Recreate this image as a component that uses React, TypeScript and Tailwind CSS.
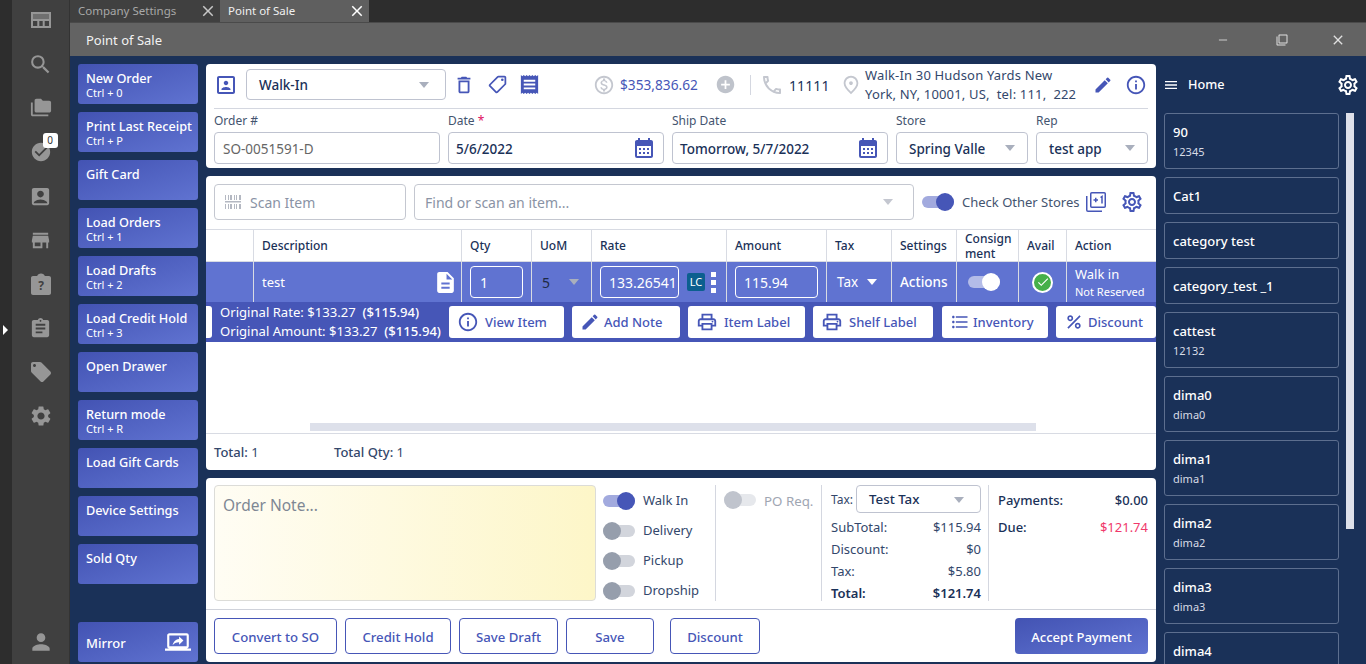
import React from "react";
import {
  MdAccountBox, MdAddCircle, MdAssignment, MdCalendarMonth, MdCheck, MdCheckCircle, MdClose, MdDescription, MdEdit,
  MdFormatListBulleted, MdInfoOutline, MdMenu, MdOutlineCall, MdOutlineDelete, MdOutlineLocalOffer,
  MdOutlineMonetizationOn, MdOutlinePlace, MdOutlinePrint, MdOutlineScreenShare, MdOutlineSettings, MdPercent, MdPerson,
  MdReceipt, MdSearch, MdSettings, MdStore, MdLocalOffer, MdFolderCopy, MdOutlineFilterNone, MdRemove, MdPortrait,
} from "react-icons/md";

const Caret = ({ c = "border-t-[#a9afbd]" }: { c?: string }) => (
  <span className={`w-0 h-0 border-x-[5px] border-x-transparent border-t-[6px] ${c}`} />
);

const Toggle = ({ on, dim, white }: { on?: boolean; dim?: boolean; white?: boolean }) => (
  <span className={`relative block w-8 h-3 rounded-full shrink-0 ${white ? "bg-[#b4bce8]" : on ? "bg-[#a2aade]" : dim ? "bg-[#e6e8ec]" : "bg-[#d2d5dc]"}`}>
    <span className={`absolute -top-[3px] w-[18px] h-[18px] rounded-full ${on ? "right-0" : "left-0"} ${white ? "bg-white" : on ? "bg-[#4656b7]" : dim ? "bg-[#c0c4cd]" : "bg-[#969eac]"}`} />
  </span>
);

const SideBtn = ({ t, s }: { t: string; s?: string }) => (
  <div className="h-10 w-[120px] shrink-0 rounded-[3px] bg-linear-to-br from-[#4353b3] to-[#6073d1] text-white pl-2 pt-[6px]">
    <div className="text-[12.7px] leading-4 font-medium">{t}</div>
    {s && <div className="text-[11px] leading-[14px]">{s}</div>}
  </div>
);

const Field = ({ label, children, star }: { label: string; children: React.ReactNode; star?: boolean }) => (
  <div>
    <div className="text-[12px] leading-4 h-4 pt-[1px] text-[#44546f]">{label}{star && <span className="text-[#e0115f]"> *</span>}</div>
    <div className="mt-[4px] h-8 border border-[#bfc3d0] rounded-[4px] flex items-center px-2 text-[13.5px] text-[#1a3158] font-medium [&>span:first-child]:pt-[2px]">{children}</div>
  </div>
);

const ActBtn = ({ w, icon, t, gap }: { w: string; icon: React.ReactNode; t: string; gap: string }) => (
  <div className={`${w} ${gap} h-8 shrink-0 bg-white rounded-[3px] flex items-center justify-start pl-2 text-[13px] font-medium text-[#4656b7]`}>
    {icon}<span className="pt-[1px]">{t}</span>
  </div>
);

const OutBtn = ({ w, t }: { w: string; t: string }) => (
  <div className={`${w} h-9 pt-[3px] border border-[#4656b7] rounded-[4px] flex items-center justify-center text-[13.2px] font-medium text-[#4656b7]`}>{t}</div>
);

const Cell = ({ c = "", children }: { c?: string; children?: React.ReactNode }) => (
  <div className={`border-r border-[#d8dbe3] flex items-center ${c}`}>{children}</div>
);

const HelpClip = () => (
  <svg width="20" height="22" viewBox="0 0 20 22" fill="#969696">
    <path d="M2 3h4.2C6.6 1.5 8 .5 10 .5s3.4 1 3.8 2.500H18c1.100 0 2 .9 2 2v15c0 1.100-.9 2-2 2H2c-1.100 0-2-.9-2-2V5c0-1.100.9-2 2-2z" />
    <text x="10" y="17" textAnchor="middle" fontSize="12" fontWeight="700" fill="#404040" fontFamily="Noto Sans">?</text>
  </svg>
);

const TableIcon = () => (
  <svg width="20" height="16" viewBox="0 0 20 16" fill="none" stroke="#969696" strokeWidth="2">
    <rect x="1" y="1" width="18" height="14" />
    <path d="M1 8h18M7.300 8v7M12.700 8v7" />
    <rect x="1" y="1" width="18" height="6" fill="#969696" stroke="none" opacity=".55" />
  </svg>
);

const Barcode = () => (
  <svg width="16" height="14" viewBox="0 0 16 14" fill="#b4b8c2" className="shrink-0">
    <path d="M0 0h1v5H0zM3 0h1v5H3zM5 0h2v5H5zM9 0h1v5H9zM11 0h1v5h-1zM14 0h2v5h-2zM0 6h16v1.500H0zM0 9h1v5H0zM3 9h1v5H3zM5 9h2v5H5zM9 9h1v5H9zM11 9h1v5h-1zM14 9h2v5h-2z" />
  </svg>
);

const PlusOne = () => (
  <svg width="20" height="20" viewBox="0 0 20 20" fill="none" stroke="#4656b7" strokeWidth="1.500" className="ml-[7px] shrink-0">
    <rect x="4.750" y=".75" width="14.500" height="14.500" rx="1" />
    <path d="M.75 4v14c0 .7.6 1.250 1.250 1.250h14" />
    <path d="M7.500 8h4.500M9.750 5.750v4.500M14.500 5.500l1.500-1v7" />
  </svg>
);

const cats: [string, string?][] = [
  ["90", "12345"], ["Cat1"], ["category test"], ["category_test _1"], ["cattest", "12132"], ["dima0", "dima0"],
  ["dima1", "dima1"], ["dima2", "dima2"], ["dima3", "dima3"], ["dima4", "dima4"],
];

const rail = "text-[#969696]";
const cols = "grid-cols-[48px_208px_70px_60px_135px_100px_65px_65px_62px_48px_1fr]";

export default function App() {
  return (
    <div className="w-[1366px] h-[664px] overflow-hidden flex bg-[#2d2d2d] font-['Noto_Sans',sans-serif]">
      <div className="relative w-3 shrink-0 bg-[#2d2d2d]">
        <span className="absolute left-[3px] top-[325px] w-0 h-0 border-y-[5px] border-y-transparent border-l-[5px] border-l-white" />
      </div>
      <div className="w-[58px] shrink-0 bg-[#404040] border-r border-[#333] flex flex-col items-center relative">
        <div className="h-11 w-full grid place-items-center -mt-[2px]"><TableIcon /></div>
        <div className="h-11 grid place-items-center"><MdSearch className={rail} size={25} /></div>
        <div className="h-11 grid place-items-center"><MdFolderCopy className={rail} size={22} /></div>
        <div className="h-11 grid place-items-center relative">
          <MdCheckCircle className={rail} size={22} />
          <span className="absolute -right-[6px] top-[3px] w-[15px] h-[15px] bg-white rounded-[3px] text-[10px] leading-[15px] text-center text-[#333]">0</span>
        </div>
        <div className="h-11 grid place-items-center"><MdAccountBox className={rail} size={23} /></div>
        <div className="h-11 grid place-items-center"><MdStore className={rail} size={23} /></div>
        <div className="h-11 grid place-items-center"><HelpClip /></div>
        <div className="h-11 grid place-items-center"><MdAssignment className={rail} size={23} /></div>
        <div className="h-11 grid place-items-center"><MdLocalOffer className={rail} size={24} /></div>
        <div className="h-11 grid place-items-center"><MdSettings className={rail} size={24} /></div>
        <div className="mt-auto h-11 grid place-items-center"><MdPerson className={rail} size={26} /></div>
      </div>

      <div className="flex-1 min-w-0 flex flex-col">
        <div className="h-[22px] flex text-[11.5px] bg-[#2d2d2d]">
          <div className="w-[150px] bg-[#404040] flex items-center justify-between pl-2 pr-[3px] text-[#a8a8a8]">Company Settings<MdClose className="text-[#c8c8c8]" size={18} /></div>
          <div className="w-[149px] bg-[#5f5f5f] flex items-center justify-between pl-2 pr-[3px] text-[#f0f0f0]">Point of Sale<MdClose className="text-white" size={18} /></div>
        </div>
        <div className="h-[34px] bg-[#636363] flex items-center pl-[16px] text-[13px] text-[#f2f2f2] border-t border-[#4a4a4a]">
          <span className="pt-[2px]">Point of Sale</span>
          <div className="ml-auto flex items-center text-[#e0e0e0]">
            <MdRemove size={14} className="text-[#bdbdbd] mr-[46px]" />
            <MdOutlineFilterNone size={12} className="mr-[42px]" />
            <MdClose size={16} className="mr-[20px]" />
          </div>
        </div>

        <div className="flex-1 min-h-0 bg-[#1a3158] flex pl-2 pt-2 overflow-hidden">
          <div className="w-[120px] shrink-0 flex flex-col gap-2 pb-[2px]">
            <SideBtn t="New Order" s="Ctrl + 0" />
            <SideBtn t="Print Last Receipt" s="Ctrl + P" />
            <SideBtn t="Gift Card" />
            <SideBtn t="Load Orders" s="Ctrl + 1" />
            <SideBtn t="Load Drafts" s="Ctrl + 2" />
            <SideBtn t="Load Credit Hold" s="Ctrl + 3" />
            <SideBtn t="Open Drawer" />
            <SideBtn t="Return mode" s="Ctrl + R" />
            <SideBtn t="Load Gift Cards" />
            <SideBtn t="Device Settings" />
            <SideBtn t="Sold Qty" />
            <div className="mt-auto h-10 rounded-[3px] bg-linear-to-br from-[#4353b3] to-[#6073d1] text-white pl-2 pr-[7px] flex items-center justify-between">
              <span className="text-[13px] font-medium pt-[3px]">Mirror</span>
              <MdOutlineScreenShare size={26} />
            </div>
          </div>

          <div className="w-[950px] ml-2 shrink-0 flex flex-col gap-2 pb-[2px]">
            {/* customer card */}
            <div className="h-[104px] bg-white rounded-[4px] px-2">
              <div className="h-[45px] pb-[3px] border-b border-[#d4d7e0] flex items-center text-[#4656b7] [&>*]:shrink-0">
                <MdPortrait size={24} />
                <div className="ml-2 w-[200px] h-[31px] pt-[1px] border border-[#bfc3d0] rounded-[4px] flex items-center justify-between pl-3 pr-4 text-[13.5px] font-medium text-[#1a3158]">Walk-In<Caret /></div>
                <MdOutlineDelete size={22} className="ml-[7px]" />
                <MdOutlineLocalOffer size={21} className="ml-[12px] scale-x-[-1]" />
                <MdReceipt size={23} className="ml-[10px]" />
                <MdOutlineMonetizationOn size={22} className="ml-[52px] text-[#c4c7cf]" />
                <span className="ml-[5px] w-[79px] pt-[2px] text-[13.7px] whitespace-nowrap">$353,836.62</span>
                <MdAddCircle size={21} className="ml-[16px] text-[#bfc3cb]" />
                <span className="ml-[14px] w-px h-5 bg-[#d4d7e0]" />
                <MdOutlineCall size={24} className="ml-[9px] text-[#c4c7cf]" />
                <span className="ml-[5px] w-[40px] pt-[2px] text-[14px] text-[#1a3158] tracking-[0.1px]">11111</span>
                <MdOutlinePlace size={22} className="ml-[11px] text-[#c4c7cf]" />
                <span className="ml-[3px] w-[222px] text-[13px] leading-[19px] text-[#33476b] tracking-[0.17px] whitespace-pre-wrap">{"Walk-In 30 Hudson Yards New York, NY, 10001, US,  tel: 111,  222"}</span>
                <MdEdit size={20} className="ml-[6px]" />
                <MdInfoOutline size={22} className="ml-[12px]" />
              </div>
              <div className="grid grid-cols-[226px_216px_216px_132px_112px] gap-2 pt-[3px]">
                <Field label="Order #"><span className="text-[#666] font-normal">SO-0051591-D</span></Field>
                <Field label="Date" star><span className="-ml-[1px]">5/6/2022</span><MdCalendarMonth size={24} className="ml-auto -mr-[1px] text-[#4656b7]" /></Field>
                <Field label="Ship Date"><span className="-ml-[1px]">Tomorrow, 5/7/2022</span><MdCalendarMonth size={24} className="ml-auto -mr-[1px] text-[#4656b7]" /></Field>
                <Field label="Store"><span className="ml-1 w-[76px] overflow-hidden whitespace-nowrap">Spring Valley</span><span className="ml-auto mr-1 flex"><Caret /></span></Field>
                <Field label="Rep"><span className="ml-[4px]">test app</span><span className="ml-auto mr-[4px] flex"><Caret /></span></Field>
              </div>
            </div>

            {/* items card */}
            <div className="h-[294px] bg-white rounded-[4px] flex flex-col overflow-hidden">
              <div className="h-[53px] shrink-0 px-2 pt-2 flex items-start [&>*]:shrink-0">
                <div className="w-[192px] h-9 border border-[#c4c7d0] rounded-[4px] flex items-center pl-[10px] gap-[9px] text-[14px] text-[#8a93a5]"><Barcode />Scan Item</div>
                <div className="ml-2 w-[500px] h-9 border border-[#c4c7d0] rounded-[4px] flex items-center justify-between pl-[10px] pr-5 text-[14px] text-[#8a93a5]">Find or scan an item...<Caret c="border-t-[#c4c7d0]" /></div>
                <div className="ml-2 h-9 flex items-center text-[#44546f] text-[13px] whitespace-nowrap">
                  <Toggle on /><span className="ml-2 pt-[1px]">Check Other Stores</span>
                  <PlusOne />
                  <MdOutlineSettings size={24} className="ml-[14px] text-[#4656b7] shrink-0" />
                </div>
              </div>
              <div className={`h-[33px] shrink-0 grid ${cols} border-y border-[#d8dbe3] text-[12px] font-medium text-[#1a3158]`}>
                <Cell />
                <Cell c="pl-2">Description</Cell>
                <Cell c="pl-2">Qty</Cell>
                <Cell c="pl-2">UoM</Cell>
                <Cell c="pl-2">Rate</Cell>
                <Cell c="pl-2">Amount</Cell>
                <Cell c="pl-2">Tax</Cell>
                <Cell c="pl-2">Settings</Cell>
                <Cell c="pl-2 leading-[15px]"><span>Consign<br />ment</span></Cell>
                <Cell c="pl-2">Avail</Cell>
                <div className="flex items-center pl-2">Action</div>
              </div>
              <div className={`h-10 shrink-0 grid ${cols} bg-[#6073d1] text-white text-[13px]`}>
                <Cell />
                <Cell c="pl-2 pr-[3px] justify-between"><span className="text-[13px] pt-[2px]">test</span><MdDescription size={25} /></Cell>
                <Cell c="pl-2"><div className="w-[53px] h-8 border border-white rounded-[4px] flex items-center pl-[9px] pt-[1px] text-[14px]">1</div></Cell>
                <Cell c="pl-[10px]"><span className="text-[#1e2a44] text-[14px] pt-[1px]">5</span><span className="ml-[19px] flex"><Caret /></span></Cell>
                <Cell c="pl-2">
                  <div className="w-[79px] h-8 border border-white rounded-[4px] flex items-center pl-2 pt-[1px] text-[14px] shrink-0">133.26541</div>
                  <span className="ml-[8px] w-[18px] h-[18px] bg-[#0c5f8f] rounded-[2px] text-[11px] leading-[18px] text-center shrink-0">LC</span>
                  <span className="ml-[6px] flex flex-col gap-[3px] shrink-0"><i className="block w-[5px] h-[5px] bg-white" /><i className="block w-[5px] h-[5px] bg-white" /><i className="block w-[5px] h-[5px] bg-white" /></span>
                </Cell>
                <Cell c="pl-2"><div className="w-[83px] h-8 border border-white rounded-[4px] flex items-center pl-2 pt-[1px] text-[14px]">115.94</div></Cell>
                <Cell c="pl-[10px] text-[13.5px]">Tax<span className="ml-[9px] flex"><Caret c="border-t-white" /></span></Cell>
                <Cell c="pl-2 text-[13.5px] font-medium">Actions</Cell>
                <Cell c="pl-[11px]"><Toggle on white /></Cell>
                <Cell c="justify-center"><span className="grid place-items-center w-[21px] h-[21px] rounded-full bg-[#46b04a] border-2 border-white text-white"><MdCheck size={14} /></span></Cell>
                <div className="pl-2 leading-[17px]"><div className="mt-[4px] text-[13px]">Walk in</div><div className="text-[11px]">Not Reserved</div></div>
              </div>
              <div className="h-10 shrink-0 bg-[#4656b7] flex items-center overflow-hidden">
                <span className="w-[6px] h-8 bg-white rounded-r-[3px] shrink-0" />
                <div className="ml-2 w-[229px] shrink-0 text-white text-[13.1px] leading-[19px] whitespace-pre">
                  <div>Original Rate: $133.27  <span className="font-medium">($115.94)</span></div>
                  <div>Original Amount: $133.27  <span className="font-medium">($115.94)</span></div>
                </div>
                <div className="flex gap-2">
                  <ActBtn w="w-[115px]" gap="gap-[6px]" icon={<MdInfoOutline size={22} />} t="View Item" />
                  <ActBtn w="w-[108px]" gap="gap-[4px]" icon={<MdEdit size={20} />} t="Add Note" />
                  <ActBtn w="w-[117px]" gap="gap-[6px]" icon={<MdOutlinePrint size={22} />} t="Item Label" />
                  <ActBtn w="w-[120px]" gap="gap-[6px]" icon={<MdOutlinePrint size={22} />} t="Shelf Label" />
                  <ActBtn w="w-[106px] ml-[1px]" gap="gap-[3px]" icon={<MdFormatListBulleted size={20} />} t="Inventory" />
                  <ActBtn w="w-[100px]" gap="gap-[4px]" icon={<MdPercent size={20} />} t="Discount" />
                </div>
              </div>
              <div className="flex-1 min-h-0 relative">
                <div className="absolute left-[104px] top-[81px] w-[726px] h-2 bg-[#dde0ea]" />
              </div>
              <div className="h-[37px] shrink-0 border-t border-[#d8dbe3] flex items-center pl-2 pt-[1px] text-[13px] text-[#33476b]">
                <span className="w-[120px]"><span className="font-medium">Total:</span> 1</span>
                <span><span className="font-medium">Total Qty:</span> 1</span>
              </div>
            </div>

            {/* totals card */}
            <div className="h-[184px] bg-white rounded-[4px] flex flex-col">
              <div className="h-[132px] shrink-0 flex pt-[7px] text-[13px] text-[#33476b] border-b border-[#cfd2da]">
                <div className="ml-2 w-[382px] h-[116px] shrink-0 rounded-[4px] border border-[#dcdcd8] bg-linear-to-r from-[#fffdf4] to-[#fdf6c8] p-2 text-[15.5px] text-[#7e8794]">Order Note...</div>
                <div className="ml-[7px] w-[113px] h-[116px] shrink-0 pt-[1px] grid auto-rows-[30px] border-r border-[#d4d7e0]">
                  {[["Walk In", true], ["Delivery", false], ["Pickup", false], ["Dropship", false]].map(([t, on]) => (
                    <div key={t as string} className="flex items-center gap-2"><Toggle on={on as boolean} />{t as string}</div>
                  ))}
                </div>
                <div className="w-[106px] h-[116px] shrink-0 border-r border-[#d4d7e0] pl-2 pt-[7px] flex items-start gap-2 text-[#a0a6b2] text-[13.3px]"><span className="mt-[2px]"><Toggle dim /></span>PO Req.</div>
                <div className="w-[167px] h-[116px] shrink-0 border-r border-[#d4d7e0] pl-[9px] pr-[7px]">
                  <div className="flex items-center justify-between h-7 text-[12px]"><span className="pt-[2px]">Tax:</span><div className="w-[125px] h-7 pt-[2px] border border-[#bfc3d0] rounded-[4px] flex items-center justify-between pl-3 pr-4 text-[13.3px] font-medium text-[#1a3158]">Test Tax<Caret /></div></div>
                  <div className="mt-[3px] leading-[22px]">
                    <div className="flex justify-between"><span>SubTotal:</span><span>$115.94</span></div>
                    <div className="flex justify-between"><span>Discount:</span><span>$0</span></div>
                    <div className="flex justify-between"><span>Tax:</span><span>$5.80</span></div>
                    <div className="flex justify-between font-semibold text-[#1a3158]"><span>Total:</span><span>$121.74</span></div>
                  </div>
                </div>
                <div className="flex-1 pl-[9px] pr-2 pt-[6px] leading-[18px] font-medium text-[#1a3158]">
                  <div className="flex justify-between"><span>Payments:</span><span>$0.00</span></div>
                  <div className="flex justify-between mt-[9px]"><span>Due:</span><span className="font-normal text-[#f0386b]">$121.74</span></div>
                </div>
              </div>
              <div className="flex items-center pl-2 pr-2 pt-2 gap-2">
                <OutBtn w="w-[123px]" t="Convert to SO" />
                <OutBtn w="w-[106px]" t="Credit Hold" />
                <OutBtn w="w-[99px]" t="Save Draft" />
                <OutBtn w="w-[88px]" t="Save" />
                <OutBtn w="w-[90px] ml-2" t="Discount" />
                <div className="ml-auto w-[133px] h-9 pt-[3px] rounded-[4px] bg-linear-to-br from-[#4353b3] to-[#6073d1] text-white flex items-center justify-center text-[13px] font-medium">Accept Payment</div>
              </div>
            </div>
          </div>

          <div className="flex-1 min-w-0 pl-2 -mt-2 flex flex-col text-white">
            <div className="h-[57px] shrink-0 flex items-center">
              <MdMenu size={16} className="ml-[-1px]" />
              <span className="ml-[9px] text-[12.7px] font-medium">Home</span>
              <MdOutlineSettings size={24} className="ml-auto mr-[6px]" />
            </div>
            <div className="flex-1 min-h-0 flex overflow-hidden">
              <div className="w-[175px] flex flex-col gap-2 shrink-0">
                {cats.map(([a, b]) => (
                  <div key={a} className={`${b ? "h-14" : "h-[37px]"} shrink-0 border border-[#5d6f8f] rounded-[3px] pl-2 flex flex-col justify-center`}>
                    <div className="text-[13px] leading-[18px] font-medium">{a}</div>
                    {b && <div className="text-[11px] leading-[15px] text-[#d8dce6] mt-[3px]">{b}</div>}
                  </div>
                ))}
              </div>
              <div className="ml-[7px] -mt-[1px] w-2 h-[417px] bg-[#dde0ea] shrink-0" />
            </div>
          </div>
        </div>
      </div>
    </div>
  );
}
